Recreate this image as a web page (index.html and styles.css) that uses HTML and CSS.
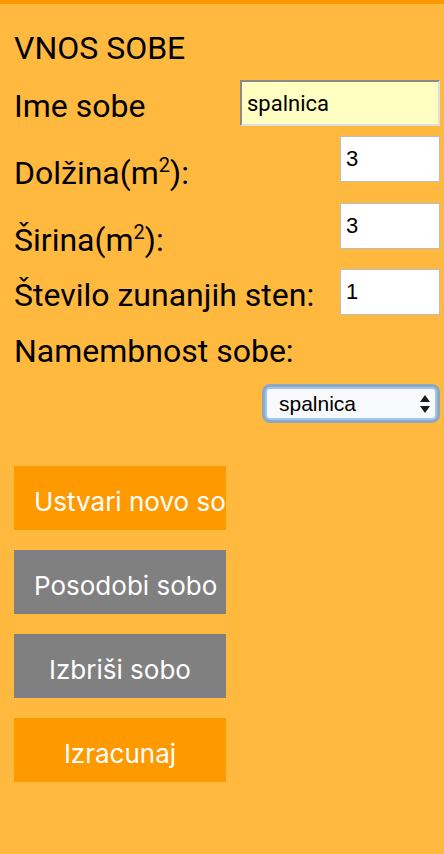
FILE: index.html
```html
<!DOCTYPE html>
<html lang="sl">
<head>
<meta charset="utf-8">
<title>Vnos sobe</title>
<link rel="stylesheet" href="styles.css">
</head>
<body>
<div class="panel">
  <h1 class="title">VNOS SOBE</h1>
  <div class="row">
    <label class="label" for="ime">Ime sobe</label>
    <input id="ime" class="field field--text" type="text" value="spalnica">
  </div>
  <div class="row">
    <label class="label" for="dolzina">Dolžina(m<sup>2</sup>):</label>
    <input id="dolzina" class="field field--num" type="text" value="3">
  </div>
  <div class="row">
    <label class="label" for="sirina">Širina(m<sup>2</sup>):</label>
    <input id="sirina" class="field field--num" type="text" value="3">
  </div>
  <div class="row">
    <label class="label" for="sten">Število zunanjih sten:</label>
    <input id="sten" class="field field--num" type="text" value="1">
  </div>
  <div class="row">
    <label class="label" for="namen">Namembnost sobe:</label>
  </div>
  <div class="select-row">
    <div class="select-wrap">
      <select id="namen" class="select">
        <option>spalnica</option>
      </select>
      <svg class="select-arrows" viewBox="0 0 10 18" aria-hidden="true">
        <path d="M0 7 L5 0 L10 7 Z" fill="#1a1a1a"/>
        <path d="M0 11 L10 11 L5 18 Z" fill="#1a1a1a"/>
      </svg>
    </div>
  </div>
  <div class="actions">
    <button class="btn btn--orange" type="button">Ustvari novo sobo</button>
    <button class="btn btn--gray" type="button">Posodobi sobo</button>
    <button class="btn btn--gray" type="button">Izbriši sobo</button>
    <button class="btn btn--orange" type="button">Izracunaj</button>
  </div>
</div>
</body>
</html>
```
FILE: styles.css
```css
* {
  box-sizing: border-box;
}

html,
body {
  margin: 0;
  padding: 0;
}

body {
  background: #ffb93f;
  color: #000;
  font-family: Roboto, "Liberation Sans", sans-serif;
}

.panel {
  border-top: 4px solid #ff9900;
  padding: 0 4px 40px 14px;
  min-height: 854px;
}

.title {
  font-size: 32px;
  font-weight: 400;
  line-height: 36px;
  margin: 26px 0 14px;
}

.row {
  display: flex;
  justify-content: space-between;
  align-items: flex-start;
  margin-bottom: 4px;
}

.label {
  font-size: 32px;
  line-height: 52px;
  white-space: nowrap;
}

.label sup {
  font-size: 20px;
  line-height: 58px;
}

.field {
  height: 46px;
  font-family: "Liberation Sans", Arial, sans-serif;
  font-size: 22px;
  padding: 0 5px;
  color: #000;
  outline: none;
}

.field--text {
  width: 200px;
  background: #ffffc2;
  border: 2px solid;
  border-color: #8a8a8a #dedede #dedede #8a8a8a;
  font-family: Roboto, "Liberation Sans", sans-serif;
}

.field--num {
  width: 100px;
  background: #fff;
  border: 1px solid #bdbdbd;
}

.select-row {
  display: flex;
  justify-content: flex-end;
  padding: 6px 3px 0 0;
}

.select-wrap {
  position: relative;
  width: 172px;
  height: 33px;
}

.select {
  appearance: none;
  -webkit-appearance: none;
  width: 100%;
  height: 100%;
  border: 2px solid #a3c5f3;
  border-radius: 5px;
  box-shadow: 0 0 0 3px #8ea8c2;
  background: #f8f9fb;
  font-family: "Liberation Sans", Arial, sans-serif;
  font-size: 21px;
  color: #000;
  padding: 0 0 0 12px;
  outline: none;
}

.select-arrows {
  position: absolute;
  right: 7px;
  top: 8px;
  width: 10px;
  height: 18px;
  pointer-events: none;
}

.actions {
  display: flex;
  flex-direction: column;
  align-items: flex-start;
  gap: 20px;
  margin-top: 46px;
}

.btn {
  width: 212px;
  height: 64px;
  border: 0;
  padding: 6px 20px 0;
  font-family: Inter, Roboto, "Liberation Sans", sans-serif;
  font-size: 26px;
  color: #fff;
  overflow: hidden;
  white-space: nowrap;
  text-align: center;
  cursor: pointer;
}

.btn--orange {
  background: #ff9900;
}

.btn--gray {
  background: #808080;
}
```
